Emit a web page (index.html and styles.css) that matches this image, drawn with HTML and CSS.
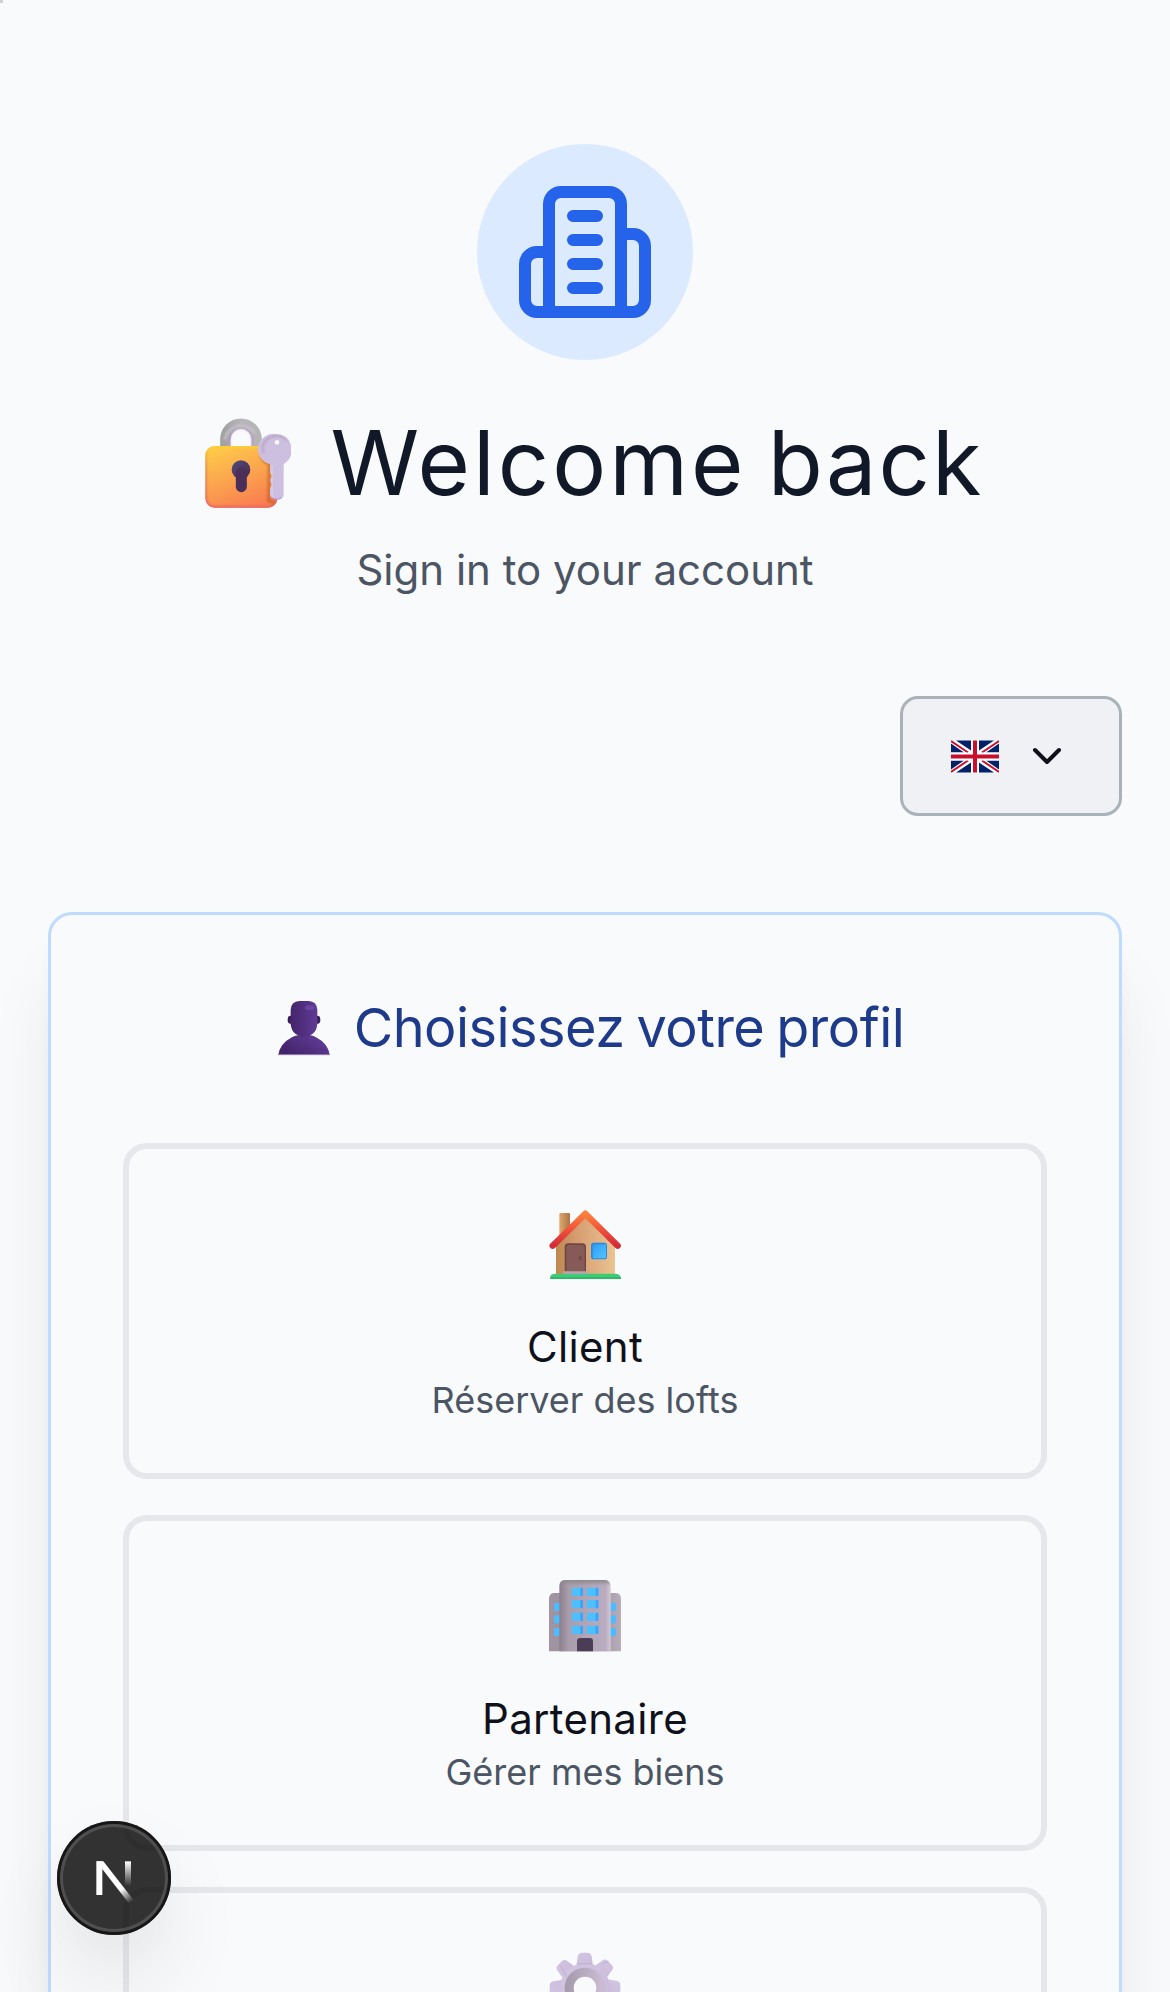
FILE: index.html
```html
<!DOCTYPE html>
<html lang="en">
<head>
<meta charset="utf-8">
<title>Welcome back</title>
<link rel="stylesheet" href="styles.css">
</head>
<body>
<main class="page">
  <header class="intro">
    <div class="logo">
      <svg class="logo-icon" viewBox="0 0 24 24" fill="none" stroke="currentColor" stroke-width="2" stroke-linecap="round" stroke-linejoin="round">
        <path d="M6 22V4a2 2 0 0 1 2-2h8a2 2 0 0 1 2 2v18Z"/>
        <path d="M6 12H4a2 2 0 0 0-2 2v6a2 2 0 0 0 2 2h2"/>
        <path d="M18 9h2a2 2 0 0 1 2 2v9a2 2 0 0 1-2 2h-2"/>
        <path d="M10 6h4M10 10h4M10 14h4M10 18h4"/>
      </svg>
    </div>
    <h1 class="title">
      <svg class="lock" viewBox="75 84 258 270">
        <defs>
          <linearGradient id="lockBody" x1=".25" y1="0" x2=".7" y2="1"><stop offset="0" stop-color="#ffc94a"/><stop offset=".45" stop-color="#fba74e"/><stop offset="1" stop-color="#f97c50"/></linearGradient>
          <linearGradient id="lockEdge" x1="0" y1="0" x2="0" y2="1"><stop offset="0" stop-color="#fbd02f"/><stop offset=".3" stop-color="#e99a51"/><stop offset="1" stop-color="#ec6466"/></linearGradient>
          <linearGradient id="shackle" x1="0" y1="0" x2="1" y2="0"><stop offset="0" stop-color="#a3a2a3"/><stop offset=".5" stop-color="#b9b6bb"/><stop offset="1" stop-color="#b5b5b5"/></linearGradient>
          <linearGradient id="keyhole" x1="0" y1="0" x2="1" y2="1"><stop offset="0" stop-color="#4f4a7c"/><stop offset="1" stop-color="#4a2a4c"/></linearGradient>
          <filter id="soft" x="-20%" y="-20%" width="140%" height="140%"><feGaussianBlur stdDeviation="3"/></filter>
          <clipPath id="bodyClip"><rect x="76" y="168" width="216" height="185" rx="28"/></clipPath>
        </defs>
        <path d="M136 172V148a47 47 0 0 1 94 0V172" fill="none" stroke="url(#shackle)" stroke-width="31"/>
        <path d="M148 172V148a35 35 0 0 1 70 0V172" fill="none" stroke="#b592ce" stroke-width="6" opacity=".7" filter="url(#soft)"/>
        <path d="M135 150a48 46 0 0 1 90-18" fill="none" stroke="#cfcdd0" stroke-width="7" opacity=".7" filter="url(#soft)"/>
        <rect x="76" y="168" width="216" height="185" rx="28" fill="url(#lockBody)"/>
        <g clip-path="url(#bodyClip)">
          <rect x="76" y="168" width="216" height="185" rx="28" fill="none" stroke="url(#lockEdge)" stroke-width="11" filter="url(#soft)"/>
          <path d="M244 170q-6 40 24 52l-2 110 20 8" fill="none" stroke="#b9611f" stroke-width="9" opacity=".65" filter="url(#soft)"/>
        </g>
        <circle cx="183" cy="239" r="28" fill="url(#keyhole)"/>
        <path d="M184 248v42" stroke="#4b2f58" stroke-width="33" stroke-linecap="round"/>
        <path fill-rule="evenodd" d="M289 133a45 45 0 0 1 44 32v30a47 47 0 0 1-22 27v96a21 13 0 0 1-41-2v-23l8-8-7-10v-8l8-8-9-10v-27a45 45 0 0 1 19-89ZM291 150a7 7 0 1 0 .1 0Z" fill="#cdbfdf"/>
        <path d="M250 190a40 40 0 0 1 26-51q26-7 47 12" fill="none" stroke="#a78daf" stroke-width="4" opacity=".8" filter="url(#soft)"/>
        <path d="M276 226v88q0 9 8 11" fill="none" stroke="#e0d2f0" stroke-width="3"/>
        <path d="M275 323q14 10 30 0" fill="none" stroke="#b388cf" stroke-width="4" opacity=".7"/>
      </svg>
      <span class="title-text"><span class="title-lead">Welcome</span> back</span>
    </h1>
    <p class="subtitle">Sign in to your account</p>
  </header>

  <div class="toolbar">
    <button class="language" type="button" aria-label="Language">
      <svg class="flag" viewBox="0 0 48 33">
        <path fill="#fff" d="M0 .5h48v32H0z"/>
        <path fill="#012169" d="M5 .5h15v10zM43 .5H28v10zM0 3.500l13 9H0zM48 3.500l-13 9h13zM0 29.500l13-9H0zM48 29.500l-13-9h13zM5 32.500h15v-10zM43 32.500H28v-10z"/>
        <path stroke="#c8102e" stroke-width="2" d="m0 1 17 11.500M48 1 31 12.500M0 32l17-11.500M48 32 31 20.500"/>
        <path fill="#fff" d="M20 .5h8v32h-8z"/><path fill="#fff" d="M0 12.500h48v8H0z"/>
        <path fill="#c8102e" d="M22 .5h4v32h-4zM0 14.500h48v4H0z"/>
      </svg>
      <svg class="chevron" viewBox="0 0 24 24" fill="none" stroke="currentColor" stroke-width="2" stroke-linecap="round" stroke-linejoin="round"><path d="m6 9 6 6 6-6"/></svg>
    </button>
  </div>

  <section class="card">
    <h2 class="card-title">
      <svg class="person" viewBox="53 62 156 165">
        <defs>
          <linearGradient id="head" x1="0" y1="0" x2="1" y2="0"><stop offset="0" stop-color="#45256b"/><stop offset="1" stop-color="#5f3b94"/></linearGradient>
          <linearGradient id="bust" x1="0" y1=".6" x2="1" y2="0"><stop offset="0" stop-color="#43246a"/><stop offset=".7" stop-color="#5c3890"/><stop offset="1" stop-color="#51307f"/></linearGradient>
        </defs>
        <ellipse cx="90" cy="118" rx="8" ry="12" fill="#3c1c59"/><ellipse cx="172" cy="118" rx="8" ry="12" fill="#3c1c59"/>
        <path d="M54 224q4-34 42-54 14-7 36-7t34 7q38 20 42 54Z" fill="url(#bust)"/>
        <path d="M54 223h154" stroke="#9a86b4" stroke-width="3"/>
        <path d="M91 88q2-25 26-26h28q24 1 26 26v43q-2 22-15 30-12 9-25 9t-25-9q-13-8-15-30Z" fill="url(#head)"/>
        <ellipse cx="148" cy="82" rx="15" ry="7" fill="#7650ad" opacity=".6"/>
      </svg>
      <span>Choisissez votre profil</span>
    </h2>
    <div class="options">
      <button class="option" type="button">
        <svg class="emoji" viewBox="87 54 216 216">
          <defs>
            <linearGradient id="wall" x1="0" y1="0" x2="1" y2="0"><stop offset="0" stop-color="#bd884f"/><stop offset=".35" stop-color="#d69d70"/><stop offset="1" stop-color="#eac491"/></linearGradient>
            <linearGradient id="chimney" x1="0" y1="0" x2="1" y2="0"><stop offset="0" stop-color="#dfa96b"/><stop offset="1" stop-color="#ad7345"/></linearGradient>
            <linearGradient id="roof" x1="0" y1="0" x2="0" y2="1"><stop offset="0" stop-color="#ff803c"/><stop offset=".55" stop-color="#ec4d3c"/><stop offset="1" stop-color="#d42b38"/></linearGradient>
            <linearGradient id="pane" x1="0" y1="0" x2="1" y2="1"><stop offset="0" stop-color="#2f9cf0"/><stop offset=".5" stop-color="#3fb1ff"/><stop offset="1" stop-color="#57c2ff"/></linearGradient>
          </defs>
          <path d="M118 72q0-3 3-3h26q3 0 3 3v70h-32Z" fill="url(#chimney)"/>
          <path d="M108 150 196 75l89 78v100H108Z" fill="url(#wall)"/>
          <path d="M98 167 196 71l97 96" fill="none" stroke="url(#roof)" stroke-width="19" stroke-linecap="round" stroke-linejoin="round"/>
          <path d="M134 245v-74q0-11 11-11h42q11 0 11 11v74Z" fill="#6f4644"/>
          <path d="M139 245v-72q0-8 8-8h40q7 0 7 8v72Z" fill="#865a57"/>
          <path d="M184 199q-6 1-5 6t6 4" fill="none" stroke="#5c3836" stroke-width="3"/>
          <rect x="130" y="244" width="73" height="9" rx="2" fill="#b7a5ab"/>
          <rect x="213" y="158" width="48" height="50" rx="8" fill="#2489df"/>
          <rect x="218" y="163" width="40" height="42" rx="4" fill="url(#pane)"/>
          <path d="M90 267q0-16 16-16h24v1h73v-1h84q16 1 16 16Z" fill="#3dcc73"/>
          <path d="M90 267q0-4 2-6h210q1 2 1 6Z" fill="#30b968"/>
        </svg>
        <span class="option-name">Client</span>
        <span class="option-note">Réserver des lofts</span>
      </button>
      <button class="option" type="button">
        <svg class="emoji" viewBox="87 60 216 216">
          <defs>
            <linearGradient id="tower" x1="0" y1="0" x2="1" y2="0"><stop offset="0" stop-color="#8b7f8e"/><stop offset=".18" stop-color="#aa9dac"/><stop offset=".9" stop-color="#b9acc0"/><stop offset="1" stop-color="#d2c9d3"/></linearGradient>
            <linearGradient id="wing" x1="0" y1="0" x2="1" y2="0"><stop offset="0" stop-color="#a093a2"/><stop offset=".6" stop-color="#998d9c"/><stop offset="1" stop-color="#b8adbb"/></linearGradient>
            <linearGradient id="glass" x1="0" y1="0" x2="1" y2="0"><stop offset="0" stop-color="#58ccff"/><stop offset="1" stop-color="#329fff"/></linearGradient>
            <linearGradient id="cap" x1="0" y1="0" x2="0" y2="1"><stop offset="0" stop-color="#8e898b"/><stop offset="1" stop-color="#8e898b" stop-opacity="0"/></linearGradient>
          </defs>
          <path d="M87 274V116q0-17 17-17h182q17 0 17 17v158Z" fill="url(#wing)"/>
          <g fill="#4cbcff">
            <rect x="102" y="129" width="25" height="24" rx="4"/><rect x="102" y="166" width="25" height="24" rx="4"/><rect x="102" y="204" width="25" height="24" rx="4"/>
            <rect x="262" y="129" width="26" height="24" rx="4"/><rect x="262" y="166" width="26" height="24" rx="4"/><rect x="262" y="204" width="26" height="24" rx="4"/>
          </g>
          <path d="M118 274V79q0-19 19-19h116q19 0 19 19v195Z" fill="url(#tower)"/>
          <path d="M119 77q2-17 18-17h116q16 0 18 17Z" fill="url(#cap)"/>
          <g class="panes" fill="#4fc0ff">
            <rect x="155" y="83" width="34" height="25" rx="3"/><rect x="200" y="83" width="35" height="25" rx="3"/>
            <rect x="155" y="120" width="34" height="25" rx="3"/><rect x="200" y="120" width="35" height="25" rx="3"/>
            <rect x="155" y="158" width="34" height="25" rx="3"/><rect x="200" y="158" width="35" height="25" rx="3"/>
            <rect x="155" y="197" width="34" height="25" rx="3"/><rect x="200" y="197" width="35" height="25" rx="3"/>
          </g>
          <path d="M181 83h8v25h-8zM181 120h8v25h-8zM181 158h8v25h-8zM181 197h8v25h-8zM227 83h8v25h-8zM227 120h8v25h-8zM227 158h8v25h-8zM227 197h8v25h-8z" fill="#37a4ff"/>
          <path d="M171 274v-30q0-10 10-10h28q10 0 10 10v30Z" fill="#4b3d56"/>
        </svg>
        <span class="option-name">Partenaire</span>
        <span class="option-note">Gérer mes biens</span>
      </button>
      <button class="option" type="button">
        <svg class="emoji" viewBox="87 246 216 216">
          <defs>
            <linearGradient id="gear" x1="0" y1="0" x2="1" y2="1"><stop offset="0" stop-color="#d3c7e2"/><stop offset="1" stop-color="#c9b9da"/></linearGradient>
            <linearGradient id="ring" x1="0" y1="0" x2="1" y2="0"><stop offset="0" stop-color="#a89caf"/><stop offset="1" stop-color="#c9bbd2"/></linearGradient>
            <path id="tooth" d="M167 300 173 260q2-12 13-12h16q11 0 13 12l6 40Z"/>
          </defs>
          <g fill="url(#gear)">
            <use href="#tooth"/><use href="#tooth" transform="rotate(45 195 354)"/><use href="#tooth" transform="rotate(90 195 354)"/><use href="#tooth" transform="rotate(135 195 354)"/><use href="#tooth" transform="rotate(180 195 354)"/><use href="#tooth" transform="rotate(225 195 354)"/><use href="#tooth" transform="rotate(270 195 354)"/><use href="#tooth" transform="rotate(315 195 354)"/>
            <circle cx="195" cy="354" r="75"/>
          </g>
          <path d="M122 287l18 34M173 281h43M246 282l20-8" fill="none" stroke="#b3a3c4" stroke-width="2"/>
          <circle cx="195" cy="354" r="47" fill="none" stroke="url(#ring)" stroke-width="28"/>
          <circle cx="195" cy="354" r="34" fill="#f9fafc"/>
        </svg>
      </button>
    </div>
  </section>
</main>

<div class="corner-mark"></div>

<div class="dev-badge">
  <svg class="dev-mark" viewBox="282 240 120 129">
    <defs>
      <linearGradient id="fadeStem" gradientUnits="userSpaceOnUse" x1="0" y1="244" x2="0" y2="318"><stop offset="0" stop-color="#fff"/><stop offset="1" stop-color="#fff" stop-opacity="0"/></linearGradient>
      <linearGradient id="fadeDiag" gradientUnits="userSpaceOnUse" x1="360" y1="328" x2="390" y2="368"><stop offset="0" stop-color="#fff"/><stop offset="1" stop-color="#fff" stop-opacity="0"/></linearGradient>
    </defs>
    <path d="M286 244h18v101h-18z" fill="#fff"/>
    <path d="M372 244h18v74h-18z" fill="url(#fadeStem)"/>
    <path d="M286 244h21l93 119-14 10-84-108Z" fill="url(#fadeDiag)"/>
  </svg>
</div>
</body>
</html>
```
FILE: styles.css
```css
* { box-sizing: border-box; }

html, body {
  margin: 0;
  height: 1992px;
  overflow: hidden;
}

body {
  background: #f9fafc;
  color: #0f111a;
  font-family: Inter, "Liberation Sans", sans-serif;
  font-weight: 400;
}

svg { display: block; flex: none; }

h1, h2, p { margin: 0; font-weight: 400; }

button {
  font: inherit;
  color: inherit;
  margin: 0;
}

.page {
  height: 1992px;
  padding: 144px 48px 0;
  overflow: hidden;
}

.intro {
  display: flex;
  flex-direction: column;
  align-items: center;
}

.logo {
  display: flex;
  align-items: center;
  justify-content: center;
  width: 216px;
  height: 216px;
  border-radius: 50%;
  background: #dbeafe;
  color: #2563eb;
}

.logo-icon { width: 144px; height: 144px; }

.title {
  display: flex;
  align-items: center;
  gap: 39px;
  margin-top: 49px;
  padding-left: 19px;
  height: 108px;
  font-size: 90px;
  line-height: 108px;
  letter-spacing: 2.1px;
  word-spacing: -6px;
  color: #111827;
  white-space: nowrap;
}

.title-lead { letter-spacing: 3px; }

.lock { width: 86px; height: 90px; }

.subtitle {
  margin-top: 23px;
  font-size: 42px;
  line-height: 60px;
  color: #4b5563;
}

.toolbar {
  display: flex;
  justify-content: flex-end;
  margin-top: 96px;
}

.language {
  display: flex;
  align-items: center;
  gap: 24px;
  height: 120px;
  padding: 0 48px;
  border: 3px solid #a9b2b9;
  border-radius: 18px;
  background: #f0f1f5;
}

.flag { width: 48px; height: 33px; }
.chevron { width: 48px; height: 48px; }

.card {
  margin-top: 96px;
  height: 1500px;
  padding: 72px;
  border: 3px solid #bfdbfe;
  border-radius: 24px;
  background: #f9fafc;
  box-shadow: 0 60px 75px -15px rgba(0, 0, 0, .1), 0 24px 30px -18px rgba(0, 0, 0, .1);
}

.card-title {
  display: flex;
  align-items: center;
  justify-content: center;
  gap: 24px;
  height: 81px;
  padding-left: 12px;
  font-size: 54px;
  line-height: 81px;
  letter-spacing: -.5px;
  word-spacing: -2.75px;
  color: #1e3a8a;
  white-space: nowrap;
}

.person { width: 52px; height: 55px; margin-top: 2px; }

.options {
  display: flex;
  flex-direction: column;
  gap: 36px;
  margin-top: 75px;
}

.option {
  display: flex;
  flex-direction: column;
  align-items: center;
  height: 336px;
  padding: 48px;
  border: 6px solid #e5e7eb;
  border-radius: 24px;
  background: transparent;
}

.emoji { width: 72px; height: 72px; margin: 11px 0 37px; }

.option-name {
  font-size: 42px;
  line-height: 59px;
  letter-spacing: .3px;
}

.option-note {
  font-size: 36px;
  line-height: 48px;
  color: #4b5563;
}

.corner-mark {
  position: absolute;
  left: 0;
  top: 0;
  width: 3px;
  height: 3px;
  background: #cfd0d2;
}

.dev-badge {
  position: fixed;
  left: 57px;
  top: 1821px;
  display: flex;
  align-items: center;
  justify-content: center;
  width: 114px;
  height: 114px;
  border-radius: 50%;
  background: rgba(0, 0, 0, .8);
  box-shadow: inset 0 0 0 3px #171717, inset 0 0 0 6px rgba(255, 255, 255, .14), 0 48px 96px -24px rgba(0, 0, 0, .24), 0 12px 60px rgba(0, 0, 0, .03);
}

.dev-mark { width: 40px; height: 43px; margin: 7px 0 0 1px; }
```
